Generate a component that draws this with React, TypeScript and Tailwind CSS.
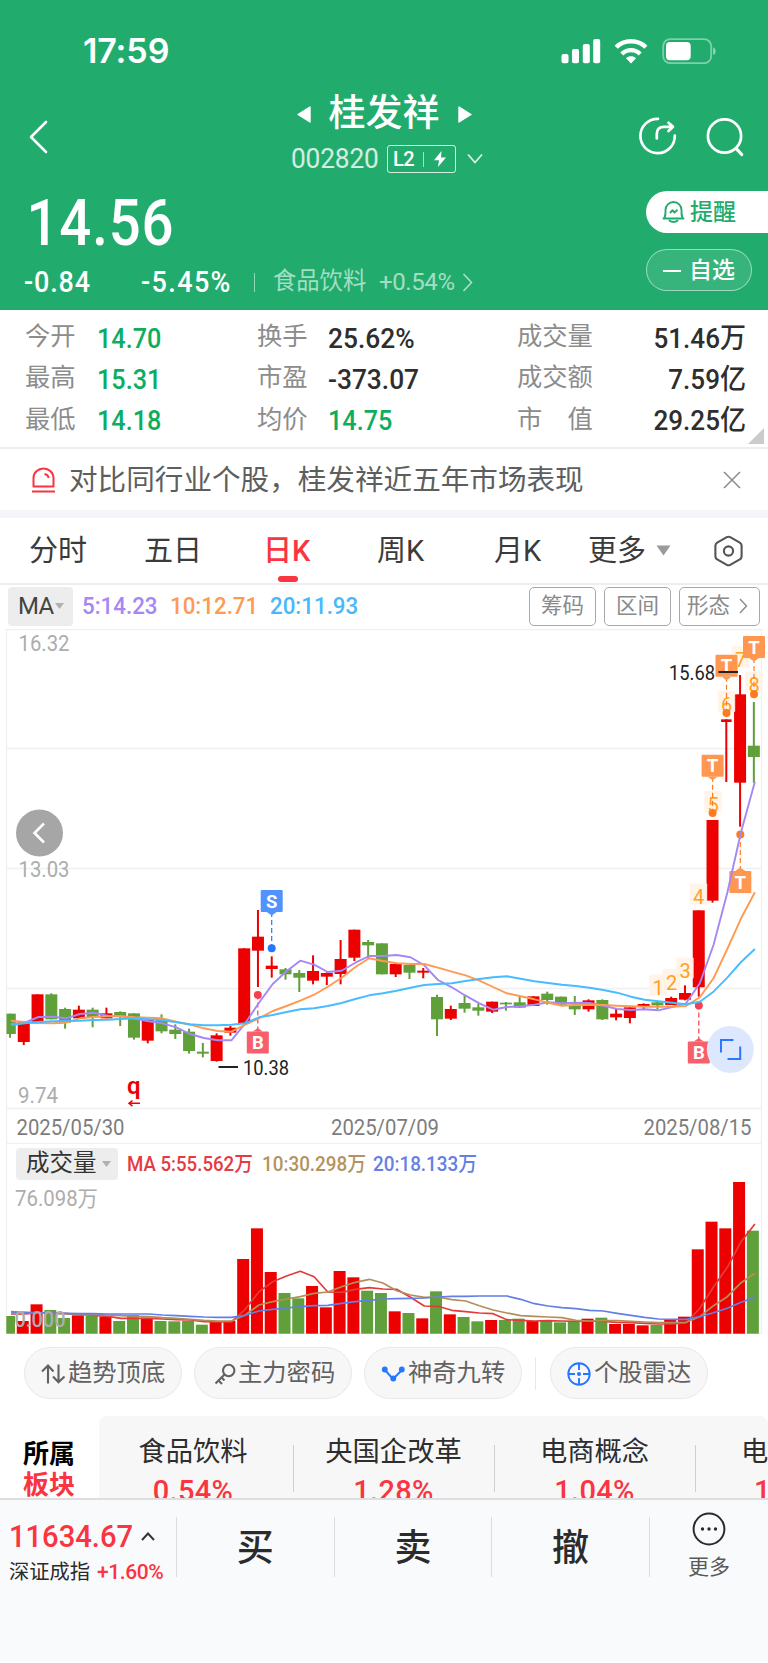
import React from "react";

// [색, 고가, 상단, 하단, 저가] : 880px 기준 1/3px 단위
type Candle = ["R" | "G", number, number, number, number];

const candles: Candle[] = [
  ["G", 401, 401, 462, 473],
  ["R", 425, 425, 486, 495],
  ["R", 343, 343, 430, 430],
  ["G", 340, 343, 418, 418],
  ["G", 383, 387, 428, 446],
  ["R", 377, 389, 415, 415],
  ["G", 383, 389, 412, 442],
  ["R", 383, 400, 415, 415],
  ["G", 394, 396, 410, 438],
  ["G", 400, 400, 473, 479],
  ["R", 417, 420, 482, 490],
  ["G", 403, 418, 454, 460],
  ["G", 433, 449, 462, 477],
  ["G", 446, 455, 513, 521],
  ["G", 489, 515, 521, 532],
  ["R", 460, 466, 543, 545],
  ["R", 438, 443, 458, 467],
  ["R", 205, 205, 430, 430],
  ["R", 90, 170, 212, 321],
  ["R", 229, 257, 267, 293],
  ["G", 264, 268, 283, 299],
  ["G", 270, 279, 293, 336],
  ["R", 226, 273, 302, 313],
  ["R", 277, 279, 290, 315],
  ["R", 180, 237, 282, 313],
  ["R", 149, 149, 233, 243],
  ["G", 180, 186, 196, 236],
  ["G", 190, 190, 283, 283],
  ["R", 252, 252, 283, 291],
  ["G", 255, 255, 278, 297],
  ["R", 264, 272, 278, 295],
  ["G", 344, 351, 418, 468],
  ["R", 377, 387, 416, 420],
  ["G", 344, 369, 386, 398],
  ["G", 370, 382, 392, 407],
  ["R", 365, 365, 395, 399],
  ["G", 366, 368, 373, 392],
  ["G", 350, 367, 383, 383],
  ["R", 349, 349, 378, 378],
  ["G", 335, 341, 360, 374],
  ["G", 350, 350, 374, 374],
  ["G", 348, 374, 388, 405],
  ["R", 358, 361, 388, 395],
  ["G", 358, 360, 418, 420],
  ["R", 385, 401, 412, 421],
  ["R", 382, 382, 414, 430],
  ["R", 370, 372, 378, 388],
  ["G", 366, 367, 376, 388],
  ["R", 350, 354, 375, 375],
  ["R", 316, 339, 359, 361],
  ["R", 91, 91, 322, 350],
  ["R", -180, -180, 62, 68],
  ["R", -482, -482, -474, -294],
  ["R", -615, -557, -292, -160],
  ["G", -534, -403, -369, -292],
];

const ma5 = [
  432, 428, 411, 410, 415, 402, 398, 407, 409, 416, 424, 430, 442, 462, 474, 481,
  481, 430, 368, 312, 274, 242, 254, 276, 272, 248, 228, 228, 225, 232, 256, 300,
  322, 347, 370, 389, 381, 379, 374, 367, 370, 368, 369, 377, 387, 390, 388, 391,
  381, 370, 310, 195, 38, -145, -295,
];
const ma10 = [
  422, 426, 429, 430, 428, 415, 411, 409, 409, 412, 413, 415, 425, 434, 445, 453,
  455, 434, 415, 393, 378, 362, 344, 320, 293, 261, 235, 243, 250, 252, 252, 263,
  275, 286, 302, 321, 340, 349, 358, 368, 377, 375, 374, 375, 377, 379, 380, 380,
  380, 378, 352, 295, 207, 115, 37,
];
const ma20 = [
  435, 430, 426, 424, 423, 422, 420, 419, 417, 415, 418, 421, 427, 433, 436, 436,
  434, 430, 412, 405, 396, 388, 385, 378, 369, 357, 346, 340, 332, 323, 315, 312,
  310, 303, 297, 292, 289, 296, 304, 309, 314, 318, 323, 330, 338, 350, 359, 364,
  368, 373, 365, 335, 293, 246, 207,
];

// 거래량 : 1130px 기준 1/3px 단위
const volumes = [
  558, 573, 523, 540, 564, 556, 558, 560, 573, 555, 563, 573, 574, 573, 584, 576,
  573, 387, 295, 426, 489, 505, 468, 532, 423, 442, 482, 489, 544, 549, 565, 484,
  553, 561, 574, 570, 570, 566, 573, 573, 577, 573, 566, 563, 582, 582, 586, 585,
  570, 560, 358, 275, 295, 156, 302,
];
const vol5 = [
  552, 552, 548, 550, 551, 553, 556, 559, 565, 565, 565, 567, 569, 570, 575, 576,
  576, 538, 485, 455, 438, 424, 440, 486, 487, 478, 473, 477, 478, 502, 528, 529,
  541, 545, 549, 551, 569, 571, 573, 572, 573, 574, 573, 574, 577, 578, 580, 582,
  582, 579, 535, 471, 412, 335, 282,
];
const vol10 = [
  545, 547, 549, 550, 551, 553, 554, 555, 557, 559, 560, 563, 565, 568, 571, 573,
  573, 555, 525, 515, 507, 500, 490, 486, 470, 457, 448, 459, 482, 495, 502, 501,
  509, 513, 527, 540, 549, 557, 559, 561, 563, 571, 573, 572, 572, 574, 576, 578,
  578, 577, 560, 527, 500, 458, 430,
];
const vol20 = [
  546, 548, 548, 549, 550, 551, 551, 552, 552, 552, 552, 555, 557, 559, 561, 562,
  562, 556, 543, 538, 534, 530, 527, 526, 520, 515, 511, 507, 506, 505, 504, 501,
  499, 499, 498, 498, 498, 508, 521, 528, 533, 536, 541, 543, 550, 556, 562, 567,
  568, 568, 560, 548, 535, 517, 502,
];

const RED = "#ed0000";
const GREEN = "#5fa03b";

const cx = (i: number) => 10 + i * 13.775;
const priceY = (v: number) => 880 + v / 3;
const volY = (v: number) => 1130 + v / 3;
const toPoints = (arr: number[], y: (v: number) => number) =>
  arr.map((v, i) => `${(cx(i) + 1).toFixed(1)},${y(v).toFixed(1)}`).join(" ");

type MarkerProps = {
  x: number;
  y: number;
  dot: number;
  label: string;
  color: string;
  dotColor: string;
};

// 매매 표시 (B / S / T)
function Marker({ x, y, dot, label, color, dotColor }: MarkerProps) {
  const below = dot < y;
  const tip = below ? y - 11 : y + 11;
  const dir = below ? -3.5 : 3.5;
  return (
    <g>
      <line
        x1={x}
        x2={x}
        y1={tip}
        y2={dot}
        stroke={dotColor}
        strokeWidth="1.2"
        strokeDasharray="5 3"
      />
      <circle cx={x} cy={dot} r="4" fill={dotColor} />
      <rect x={x - 11} y={y - 11} width="22" height="22" rx="1" fill={color} />
      <polygon
        points={`${x - 5},${tip} ${x + 5},${tip} ${x},${tip + dir}`}
        fill={color}
      />
      <text
        x={x}
        y={y + 6.5}
        textAnchor="middle"
        fontSize="18.5"
        fontWeight="700"
        fill="#fff"
      >
        {label}
      </text>
    </g>
  );
}

const nines = [
  { n: "1", x: 658, y: 988 },
  { n: "2", x: 671.5, y: 982.5 },
  { n: "3", x: 685, y: 971 },
  { n: "4", x: 698.5, y: 897 },
  { n: "5", x: 713, y: 804.5 },
  { n: "6", x: 726.5, y: 704.5 },
  { n: "7", x: 740.5, y: 659.5 },
  { n: "8", x: 754, y: 685 },
];

function KChart() {
  return (
    <svg
      className="block h-[515px] w-full font-[Roboto,sans-serif]"
      viewBox="0 629 768 515"
    >
      <g stroke="#f0f0f0" strokeWidth="1.3" fill="none">
        <line x1="6.5" y1="629.5" x2="761.5" y2="629.5" />
        <line x1="6.5" y1="748.5" x2="761.5" y2="748.5" />
        <line x1="6.5" y1="868.5" x2="761.5" y2="868.5" />
        <line x1="6.5" y1="988.5" x2="761.5" y2="988.5" />
        <line x1="6.5" y1="1108.5" x2="761.5" y2="1108.5" />
        <line x1="6.5" y1="1143.5" x2="761.5" y2="1143.5" />
        <line x1="6.5" y1="629" x2="6.5" y2="1144" />
        <line x1="761.5" y1="629" x2="761.5" y2="1144" />
      </g>

      <g fontSize="22.5" fill="#adadad">
        <text x="18.5" y="651" textLength="51" lengthAdjust="spacingAndGlyphs">
          16.32
        </text>
        <text x="18.5" y="877" textLength="51" lengthAdjust="spacingAndGlyphs">
          13.03
        </text>
        <text x="18" y="1103" textLength="40" lengthAdjust="spacingAndGlyphs">
          9.74
        </text>
      </g>

      {candles.map(([color, high, top, bottom, low], i) => {
        const fill = color === "R" ? RED : GREEN;
        const left = i === 0 ? 6.5 : cx(i) - 6;
        const w = i === 0 ? 9.3 : i === 52 ? 10.5 : 12;
        return (
          <g key={i} fill={fill}>
            <rect
              x={cx(i) - 1}
              y={priceY(high)}
              width="2"
              height={(low - high) / 3}
            />
            <rect
              x={i === 52 ? cx(i) - 5.2 : left}
              y={priceY(top)}
              width={w}
              height={(bottom - top) / 3}
            />
          </g>
        );
      })}

      {nines.map((d) => (
        <g key={d.n}>
          <rect
            x={d.x - 8.7}
            y={d.y - 13.5}
            width="17.4"
            height="21"
            rx="1"
            fill="#fff3e4"
            fillOpacity="0.9"
          />
          <text
            x={d.x}
            y={d.y + 7}
            textAnchor="middle"
            fontSize="20"
            fill="#ffa11f"
          >
            {d.n}
          </text>
        </g>
      ))}

      <Marker x={271.7} y={901} dot={948.3} label="S" color="#5292fd" dotColor="#2577ff" />
      <Marker x={257.8} y={1042.5} dot={995} label="B" color="#f95e6b" dotColor="#f7404f" />
      <Marker x={698.8} y={1052.5} dot={1005.5} label="B" color="#f95e6b" dotColor="#f7404f" />
      <Marker x={712.6} y={765.7} dot={813} label="T" color="#ff9750" dotColor="#ff7b20" />
      <Marker x={726.5} y={665.8} dot={713} label="T" color="#ff9750" dotColor="#ff7b20" />
      <Marker x={754} y={647} dot={694.2} label="T" color="#ff9750" dotColor="#ff7b20" />
      <Marker x={740.3} y={882} dot={834.5} label="T" color="#ff9750" dotColor="#ff7b20" />

      <g fill="none" strokeWidth="1.9" strokeLinejoin="round">
        <polyline points={toPoints(ma5, priceY)} stroke="#a587f5" />
        <polyline points={toPoints(ma10, priceY)} stroke="#ff9a52" />
        <polyline points={toPoints(ma20, priceY)} stroke="#47bcff" />
      </g>

      {/* 최고 / 최저 */}
      <line x1="718.5" x2="738" y1="672" y2="672" stroke="#222" strokeWidth="2" />
      <text x="669" y="679.5" fontSize="20.5" fill="#222" textLength="46" lengthAdjust="spacingAndGlyphs">
        15.68
      </text>
      <line x1="218.5" x2="238" y1="1067" y2="1067" stroke="#222" strokeWidth="2" />
      <text x="243" y="1074.5" fontSize="20.5" fill="#222" textLength="46" lengthAdjust="spacingAndGlyphs">
        10.38
      </text>

      <text x="127" y="1094" fontSize="24" fontWeight="600" fill="#ed0000">
        q
      </text>
      <path
        d="M140 1103.3H129.5M132.5 1100.5L129 1103.3L132.5 1106.1"
        stroke="#ed0000"
        strokeWidth="1.5"
        fill="none"
      />

      <circle cx="39.5" cy="833" r="23.5" fill="#a6a6a6" />
      <path
        d="M44 823.5L34.5 833L44 842.5"
        stroke="#fff"
        strokeWidth="2.6"
        fill="none"
      />
      <circle cx="730.3" cy="1049.5" r="23.5" fill="#dde8fe" />
      <path
        d="M721 1052.5V1040H733.5M740.2 1046.5V1059H727.5"
        stroke="#2b78ff"
        strokeWidth="2"
        fill="none"
      />

      <g fontSize="22.5" fill="#7d7d7d">
        <text x="16.5" y="1135" textLength="108" lengthAdjust="spacingAndGlyphs">
          2025/05/30
        </text>
        <text x="331" y="1135" textLength="108" lengthAdjust="spacingAndGlyphs">
          2025/07/09
        </text>
        <text x="643.5" y="1135" textLength="108" lengthAdjust="spacingAndGlyphs">
          2025/08/15
        </text>
      </g>
    </svg>
  );
}

function VolumeChart() {
  return (
    <svg
      className="block h-[152px] w-full font-[Roboto,'Noto_Sans_CJK_SC',sans-serif]"
      viewBox="0 1182 768 152"
    >
      <path d="M6.5 1182V1333.5H761.5V1182" stroke="#f0f0f0" strokeWidth="1.3" fill="none" />
      <text x="15" y="1206" fontSize="21.5" fill="#adadad" textLength="83" lengthAdjust="spacingAndGlyphs">
        76.098万
      </text>
      {volumes.map((v, i) => (
        <rect
          key={i}
          x={i === 0 ? 6.3 : cx(i) - 7}
          y={volY(v)}
          width={i === 0 ? 8.7 : 12}
          height={1333.7 - volY(v)}
          fill={candles[i][0] === "R" ? RED : GREEN}
        />
      ))}
      <g fill="none" strokeWidth="1.7" strokeLinejoin="round">
        <polyline points={toPoints(vol5, volY)} stroke="#e33a3a" />
        <polyline points={toPoints(vol10, volY)} stroke="#b28f5a" />
        <polyline points={toPoints(vol20, volY)} stroke="#627ee8" />
      </g>
      <text x="14.5" y="1327" fontSize="21.5" fontWeight="500" fill="#adadad" textLength="51" lengthAdjust="spacingAndGlyphs">
        0.000
      </text>
    </svg>
  );
}

function StatusBar() {
  return (
    <div className="flex h-[93px] items-center pt-[9px] pl-[83px]">
      <span className="w-[477px] font-[Inter] text-[34px] font-semibold tracking-[-0.1px]">
        17:59
      </span>
      <svg className="h-[26px] w-[160px]" viewBox="560 38 160 26" fill="#fff">
        <rect x="561.5" y="54" width="7" height="9.3" rx="2" />
        <rect x="572" y="49" width="7" height="14.3" rx="2" />
        <rect x="582.8" y="44" width="7" height="19.3" rx="2" />
        <rect x="593.2" y="39" width="7" height="24.3" rx="2" />
        <g fill="none" stroke="#fff" strokeWidth="4.4">
          <path d="M616.2 47.2C624 39.3 638 39.3 645.8 47.2" />
          <path d="M621.8 54C627 48.8 635 48.8 640.2 54" />
        </g>
        <path d="M631 63.4L626 58.2C629 55.6 633 55.6 636 58.2Z" />
        <rect x="663.2" y="39.2" width="48" height="24" rx="7" fill="none" stroke="#fff" strokeOpacity="0.42" strokeWidth="1.8" />
        <rect x="666" y="42" width="24.7" height="18.3" rx="4" />
        <path d="M713.2 47.2C716.4 48.5 716.4 53.8 713.2 55Z" fillOpacity="0.5" />
      </svg>
    </div>
  );
}

function Header() {
  return (
    <header className="h-[310px] bg-[#21ac6e] text-white">
      <StatusBar />
      <div className="flex h-[82px]">
        <svg className="mt-[27px] ml-[28px] h-[34px] w-[20px]" viewBox="0 0 20 34" fill="none">
          <path d="M18 2L3 17L18 32" stroke="#fff" strokeWidth="2.6" strokeLinecap="round" strokeLinejoin="round" />
        </svg>
        <div className="ml-[235px] flex w-[202px] flex-col items-center">
          <div className="mt-[1px] flex h-[40px] items-center gap-[15px]">
            <svg className="h-[17px] w-[14px]" viewBox="0 0 14 17">
              <path d="M13 1V16L1 8.5Z" fill="#fff" stroke="#fff" strokeWidth="1.4" strokeLinejoin="round" />
            </svg>
            <h1 className="px-[3px] text-[37px] leading-[40px] font-medium">桂发祥</h1>
            <svg className="h-[17px] w-[14px]" viewBox="0 0 14 17">
              <path d="M1 1V16L13 8.5Z" fill="#fff" stroke="#fff" strokeWidth="1.4" strokeLinejoin="round" />
            </svg>
          </div>
          <div className="mt-[10px] flex h-[30px] w-[192px] items-center pl-[3px]">
            <span className="w-[96px] shrink-0 origin-left scale-x-[0.94] text-[28px] tracking-[-0.2px] text-white/80">
              002820
            </span>
            <span className="flex h-[28px] w-[69px] shrink-0 items-center rounded-[3px] border border-white/80 pl-[5px] text-[20px] font-medium tracking-[-0.5px]">
              L2
              <span className="ml-[9px] h-[15px] w-px bg-white/60" />
              <svg className="ml-[9px] h-[18px] w-[14px]" viewBox="0 0 14 18">
                <path d="M8.5 1L1 10.2H6L5 17L13 7.5H8Z" fill="#fff" />
              </svg>
            </span>
            <svg className="ml-[11px] h-[12px] w-[16px] shrink-0" viewBox="0 0 16 12" fill="none">
              <path d="M1 1.5L8 9.5L15 1.5" stroke="#fff" strokeOpacity="0.85" strokeWidth="1.7" />
            </svg>
          </div>
        </div>
        <svg className="mt-[22px] ml-[152px] h-[42px] w-[110px]" viewBox="637 115 110 42" fill="none" stroke="#fff" strokeWidth="2.7" strokeLinecap="round" strokeLinejoin="round">
          <path d="M658 118.8A17.2 17.2 0 1 0 674.8 135.6" />
          <path d="M656.8 138.5V134C656.8 129 660 126.8 664 126.8H672.5M668.5 122.8L673 126.8L668.5 131" />
          <circle cx="724.5" cy="136" r="16.6" />
          <path d="M736.3 148.7L741.7 154.5" strokeWidth="3.2" />
        </svg>
      </div>
      <div className="flex justify-between">
        <div>
          <div className="mt-[17px] flex h-[64px] origin-left scale-x-[0.88] items-center pl-[30px] text-[64px] font-medium tracking-[1px]">
            14.56
          </div>
          <div className="mt-[11px] flex h-[30px] items-center pl-[24px]">
            <span className="w-[117px] origin-left scale-x-[0.93] text-[29px] font-medium tracking-[0.9px]">-0.84</span>
            <span className="w-[113px] origin-left scale-x-[0.93] text-[29px] font-medium tracking-[1.5px]">-5.45%</span>
            <span className="h-[19px] w-px bg-white/50" />
            <span className="ml-[18px] w-[106px] text-[23.3px] text-white/60">食品饮料</span>
            <span className="w-[83px] text-[24px] tracking-[-0.4px] text-white/60">+0.54%</span>
            <svg className="h-[19px] w-[11px]" viewBox="0 0 11 19" fill="none">
              <path d="M1.5 1L9.5 9.5L1.5 18" stroke="#fff" strokeOpacity="0.65" strokeWidth="1.5" />
            </svg>
          </div>
        </div>
        <div className="mt-[16px] flex flex-col gap-[16px]">
          <div className="flex h-[42px] w-[122px] items-center rounded-l-full bg-white pl-[16px] text-[23px] font-medium text-[#21ac6e]">
            <svg className="mr-[5px] h-[24px] w-[23px]" viewBox="0 0 23 24" fill="none" stroke="#21ac6e" strokeWidth="1.9" strokeLinejoin="round">
              <path d="M1.5 18.5C3.5 17.5 3.5 15 3.5 10A8 8 0 0 1 19.5 10C19.5 15 19.5 17.5 21.5 18.5Z" />
              <path d="M7 20C8.5 22.6 14.5 22.6 16 20" />
              <path d="M8 13L10.5 10.2L12.5 12.6L15.5 9.8" />
            </svg>
            提醒
          </div>
          <div className="flex h-[42px] w-[106px] items-center rounded-full border border-white/50 bg-white/10 pt-[1px] pl-[16px] text-[23px] font-medium">
            <span className="mr-[8px] h-[2px] w-[18px] bg-white" />
            自选
          </div>
        </div>
      </div>
    </header>
  );
}

const stats = [
  ["今开", "14.70", "换手", "25.62%", "成交量", "51.46万"],
  ["最高", "15.31", "市盈", "-373.07", "成交额", "7.59亿"],
  ["最低", "14.18", "均价", "14.75", "市　值", "29.25亿"],
];

function Stats() {
  return (
    <section className="relative h-[139px] border-b-2 border-[#ededf0] pt-[8px]">
      {stats.map((row, i) => (
        <div
          key={i}
          className="flex h-[41.3px] items-center pl-[25px] text-[28px] font-medium text-[#2e2e2e]"
        >
          <span className="w-[72px] pb-[4px] text-[25.3px] font-normal text-[#8c8c8c]">{row[0]}</span>
          <span className="w-[160px] origin-left scale-x-[0.9] text-[#0cad5e]">{row[1]}</span>
          <span className="w-[71px] pb-[4px] text-[25.3px] font-normal text-[#8c8c8c]">{row[2]}</span>
          <span
            className={
              i === 2
                ? "w-[189px] origin-left scale-x-[0.9] text-[#0cad5e]"
                : "w-[189px] origin-left scale-x-[0.94]"
            }
          >
            {row[3]}
          </span>
          <span className="w-[80px] pb-[4px] text-[25.3px] font-normal whitespace-nowrap text-[#8c8c8c]">{row[4]}</span>
          <span className="w-[149px] origin-right scale-x-[0.93] text-right">{row[5]}</span>
        </div>
      ))}
      <svg className="absolute right-[4px] bottom-[3px] h-[16px] w-[16px]" viewBox="0 0 16 16">
        <path d="M16 0V16H0Z" fill="#cbcbcb" />
      </svg>
    </section>
  );
}

function Notice() {
  return (
    <section className="flex h-[61px] items-center pl-[31px] text-[28.6px] text-[#5e5e5e]">
      <svg className="mr-[13px] h-[26px] w-[25px]" viewBox="0 0 25 26" fill="none" stroke="#fa3440" strokeWidth="2">
        <path d="M2.5 19.5V11A10 9.5 0 0 1 22.5 11V19.5Z" strokeLinejoin="round" />
        <path d="M1 24.5H24M13.5 7C16 7.3 17.3 8.8 17.7 11" />
      </svg>
      <span className="w-[654px] pt-[2px]">对比同行业个股，桂发祥近五年市场表现</span>
      <svg className="h-[18px] w-[18px]" viewBox="0 0 18 18" fill="none">
        <path d="M1 1L17 17M17 1L1 17" stroke="#8f8f8f" strokeWidth="1.6" />
      </svg>
    </section>
  );
}

function Tabs() {
  return (
    <nav className="flex h-[67px] items-center border-b-2 border-[#ededed] pl-[29px] text-[29px] text-[#3b3b3b]">
      <span className="w-[115px] pt-[2px]">分时</span>
      <span className="w-[119px] pt-[2px]">五日</span>
      <span className="relative w-[114px] pt-[2px] text-[#fa3440]">
        <span className="font-medium">日K</span>
        <span className="absolute -bottom-[16px] left-[15px] h-[6px] w-[20px] rounded-full bg-[#fa3440]" />
      </span>
      <span className="w-[117px] pt-[2px]">周K</span>
      <span className="w-[94px] pt-[2px]">月K</span>
      <span className="w-[68px] pt-[2px]">更多</span>
      <svg className="h-[11px] w-[15px]" viewBox="0 0 15 11">
        <path d="M0.5 0.5H14.5L7.5 10.5Z" fill="#9a9a9a" />
      </svg>
      <svg className="ml-[42px] h-[32px] w-[31px]" viewBox="0 0 31 32" fill="none" stroke="#555" strokeWidth="2.1" strokeLinejoin="round">
        <path d="M13.8 2.2Q15.5 1.2 17.2 2.2L26.8 7.7Q28.6 8.8 28.6 10.6V21.4Q28.6 23.2 26.8 24.3L17.2 29.8Q15.5 30.8 13.8 29.8L4.2 24.3Q2.4 23.2 2.4 21.4V10.6Q2.4 8.8 4.2 7.7Z" />
        <circle cx="15.5" cy="16" r="4.6" />
      </svg>
    </nav>
  );
}

function MaBar() {
  return (
    <div className="flex h-[44px] items-center pb-[2px] pl-[8px] text-[24px]">
      <span className="mr-[9px] flex h-[39px] w-[65px] items-center rounded-[4px] bg-[#ededed] pl-[10px] tracking-[-0.6px] text-[#444]">
        MA
        <svg className="ml-[1px] h-[6px] w-[9px]" viewBox="0 0 9 6">
          <path d="M0 0H9L4.5 6Z" fill="#b0b0b0" />
        </svg>
      </span>
      <span className="w-[88px] origin-left scale-x-[0.93] font-medium text-[#a587f5]">5:14.23</span>
      <span className="w-[100px] origin-left scale-x-[0.93] font-medium text-[#ff9a52]">10:12.71</span>
      <span className="w-[259px] origin-left scale-x-[0.93] font-medium text-[#47b9fa]">20:11.93</span>
      <span className="mr-[8px] flex h-[39px] w-[67px] items-center justify-center rounded-[5px] border border-[#a8a8a8] text-[21.5px] text-[#8a8a8a]">
        筹码
      </span>
      <span className="mr-[8px] flex h-[39px] w-[67px] items-center justify-center rounded-[5px] border border-[#a8a8a8] text-[21.5px] text-[#8a8a8a]">
        区间
      </span>
      <span className="flex h-[39px] w-[81px] items-center rounded-[5px] border border-[#a8a8a8] pl-[7px] text-[21.5px] text-[#8a8a8a]">
        形态
        <svg className="ml-[9px] h-[16px] w-[9px]" viewBox="0 0 9 16" fill="none">
          <path d="M1 1L7.5 8L1 15" stroke="#8a8a8a" strokeWidth="1.4" />
        </svg>
      </span>
    </div>
  );
}

function VolumeBar() {
  return (
    <div className="mx-[6px] flex h-[38px] items-center border-x border-[#f0f0f0] pt-[2px] pl-[9px] text-[20.5px] font-medium whitespace-nowrap">
      <span className="mr-[9px] flex h-[32px] w-[102px] items-center rounded-[4px] bg-[#ededed] pl-[10px] text-[23.5px] font-normal text-[#333]">
        成交量
        <svg className="ml-[5px] h-[6px] w-[9px]" viewBox="0 0 9 6">
          <path d="M0 0H9L4.5 6Z" fill="#b0b0b0" />
        </svg>
      </span>
      <span className="w-[135px] origin-left scale-x-[0.91] pt-[1px] text-[#e63a42]">MA 5:55.562万</span>
      <span className="w-[111px] origin-left scale-x-[0.92] pt-[1px] text-[#b3935f]">10:30.298万</span>
      <span className="origin-left scale-x-[0.92] pt-[1px] text-[#6480e4]">20:18.133万</span>
    </div>
  );
}

const chip =
  "flex h-[52px] w-[158px] items-center rounded-full border border-[#e9e9e9] bg-[#f7f7f7] pt-[1px] pl-[16px] text-[24.3px] text-[#626262]";

function Chips() {
  return (
    <div className="flex h-[82px] items-start pt-[13px] pl-[24px]">
      <div className={chip}>
        <svg className="mr-[3px] h-[24px] w-[24px]" viewBox="0 0 24 24" fill="none" stroke="#626262" strokeWidth="2.1">
          <path d="M7 21.5V4M1 9.5L7 3.5L12.5 9.5M17.5 2.5V20M12 14.5L17.5 20.3L23.5 14.5" />
        </svg>
        趋势顶底
      </div>
      <div className={chip + " ml-[12px]"}>
        <svg className="mr-[2px] ml-[3px] h-[24px] w-[22px]" viewBox="0 0 22 24" fill="none" stroke="#626262" strokeWidth="2.1">
          <circle cx="14.7" cy="8.5" r="5.7" />
          <path d="M10.5 12.5L1.5 21.5M4.5 18.5L8 22M7.5 15.5L10.5 18.5" />
        </svg>
        主力密码
      </div>
      <div className={chip + " ml-[12px]"}>
        <svg className="mr-[3px] h-[24px] w-[24px]" viewBox="0 0 24 24" fill="none" stroke="#2577ff" strokeWidth="1.9">
          <path d="M4 8L12 17L21 8" />
          <g fill="#2577ff" stroke="none">
            <circle cx="3.8" cy="7.5" r="2.9" />
            <circle cx="12.3" cy="16.5" r="2.9" />
            <circle cx="20.8" cy="7.5" r="2.9" />
          </g>
        </svg>
        神奇九转
      </div>
      <span className="mt-[10px] ml-[13px] h-[33px] w-px bg-[#e8e8e8]" />
      <div className={chip + " ml-[14px]"}>
        <svg className="mr-[3px] h-[24px] w-[24px]" viewBox="0 0 24 24" fill="none" stroke="#2577ff" strokeWidth="1.9">
          <circle cx="12" cy="12" r="10.7" />
          <path d="M12 1V8M12 16V23M1 12H8M16 12H23" />
          <circle cx="12" cy="12" r="2" fill="#2577ff" stroke="none" />
        </svg>
        个股雷达
      </div>
    </div>
  );
}

const sectors = [
  { name: "食品饮料", rate: "0.54%" },
  { name: "央国企改革", rate: "1.28%" },
  { name: "电商概念", rate: "1.04%" },
];

function Sectors() {
  return (
    <section className="flex h-[82px] overflow-hidden">
      <div className="w-[99px] pt-[23px] pl-[23px] text-[26px] leading-[31px] font-bold">
        <p className="text-black">所属</p>
        <p className="text-[#fa3440]">板块</p>
      </div>
      <div className="flex w-[669px] overflow-hidden rounded-t-[8px] bg-[#f7f7f7]">
        {sectors.map((s, i) => (
          <div
            key={s.name}
            className={
              i === 0
                ? "relative w-[195px] shrink-0 pr-[7px] text-center"
                : "relative w-[201px] shrink-0 pr-[2px] text-center"
            }
          >
            <p className="mt-[18px] h-[36px] text-[27.3px] leading-[36px] text-[#2e2e2e]">{s.name}</p>
            <p className="mt-[3px] text-[29px] leading-[36px] font-medium tracking-[0.3px] text-[#fa3440]">{s.rate}</p>
            <span className="absolute top-[29px] right-0 h-[47px] w-px bg-[#cfcfcf]" />
          </div>
        ))}
        <div className="w-[72px] shrink-0 pl-[45px]">
          <p className="mt-[18px] h-[36px] text-[27.3px] leading-[36px] text-[#2e2e2e]">电</p>
          <p className="mt-[3px] pl-[13px] text-[29px] leading-[36px] font-medium text-[#fa3440]">1</p>
        </div>
      </div>
    </section>
  );
}

function BottomBar() {
  return (
    <footer className="flex h-[164px] border-t-2 border-[#dedee0] bg-[#f9fafc] text-[#2b2b2b]">
      <div className="w-[176px] pt-[18px] pl-[9px]">
        <div className="flex h-[36px] items-center text-[31px] font-medium text-[#fa3440]">
          <span className="w-[132px] origin-left scale-x-[0.94]">11634.67</span>
          <svg className="h-[9px] w-[14px]" viewBox="0 0 14 9" fill="none">
            <path d="M1 8L7 1.5L13 8" stroke="#333" strokeWidth="1.9" />
          </svg>
        </div>
        <div className="mt-[3px] flex h-[30px] items-center text-[20.3px]">
          <span className="w-[88px]">深证成指</span>
          <span className="text-[21px] font-medium tracking-[-0.4px] text-[#fa3440]">+1.60%</span>
        </div>
      </div>
      {["买", "卖", "撤"].map((t) => (
        <div
          key={t}
          className="mt-[17px] flex h-[60px] w-[157.6px] items-center justify-center border-l border-[#dcdde0] pt-[3px] text-[37px] font-medium"
        >
          {t}
        </div>
      ))}
      <div className="mt-[17px] flex h-[60px] flex-1 flex-col items-center border-l border-[#dcdde0]">
        <svg className="-mt-[5px] h-[34px] w-[34px] shrink-0" viewBox="0 0 34 34" fill="none">
          <circle cx="17" cy="17" r="15.4" stroke="#2b2b2b" strokeWidth="2" />
          <g fill="#2b2b2b">
            <circle cx="10.5" cy="17" r="1.7" />
            <circle cx="17" cy="17" r="1.7" />
            <circle cx="23.5" cy="17" r="1.7" />
          </g>
        </svg>
        <span className="mt-[7px] text-[21px] leading-[28px] text-[#5a5a5a]">更多</span>
      </div>
    </footer>
  );
}

function App() {
  return (
    <main className="h-[1663px] w-[768px] overflow-hidden bg-white font-[Roboto,'Noto_Sans_CJK_SC',sans-serif] leading-none">
      <Header />
      <Stats />
      <Notice />
      <div className="h-[8px] bg-[#f3f5f9]" />
      <Tabs />
      <MaBar />
      <KChart />
      <VolumeBar />
      <VolumeChart />
      <Chips />
      <Sectors />
      <BottomBar />
    </main>
  );
}

export default App;
